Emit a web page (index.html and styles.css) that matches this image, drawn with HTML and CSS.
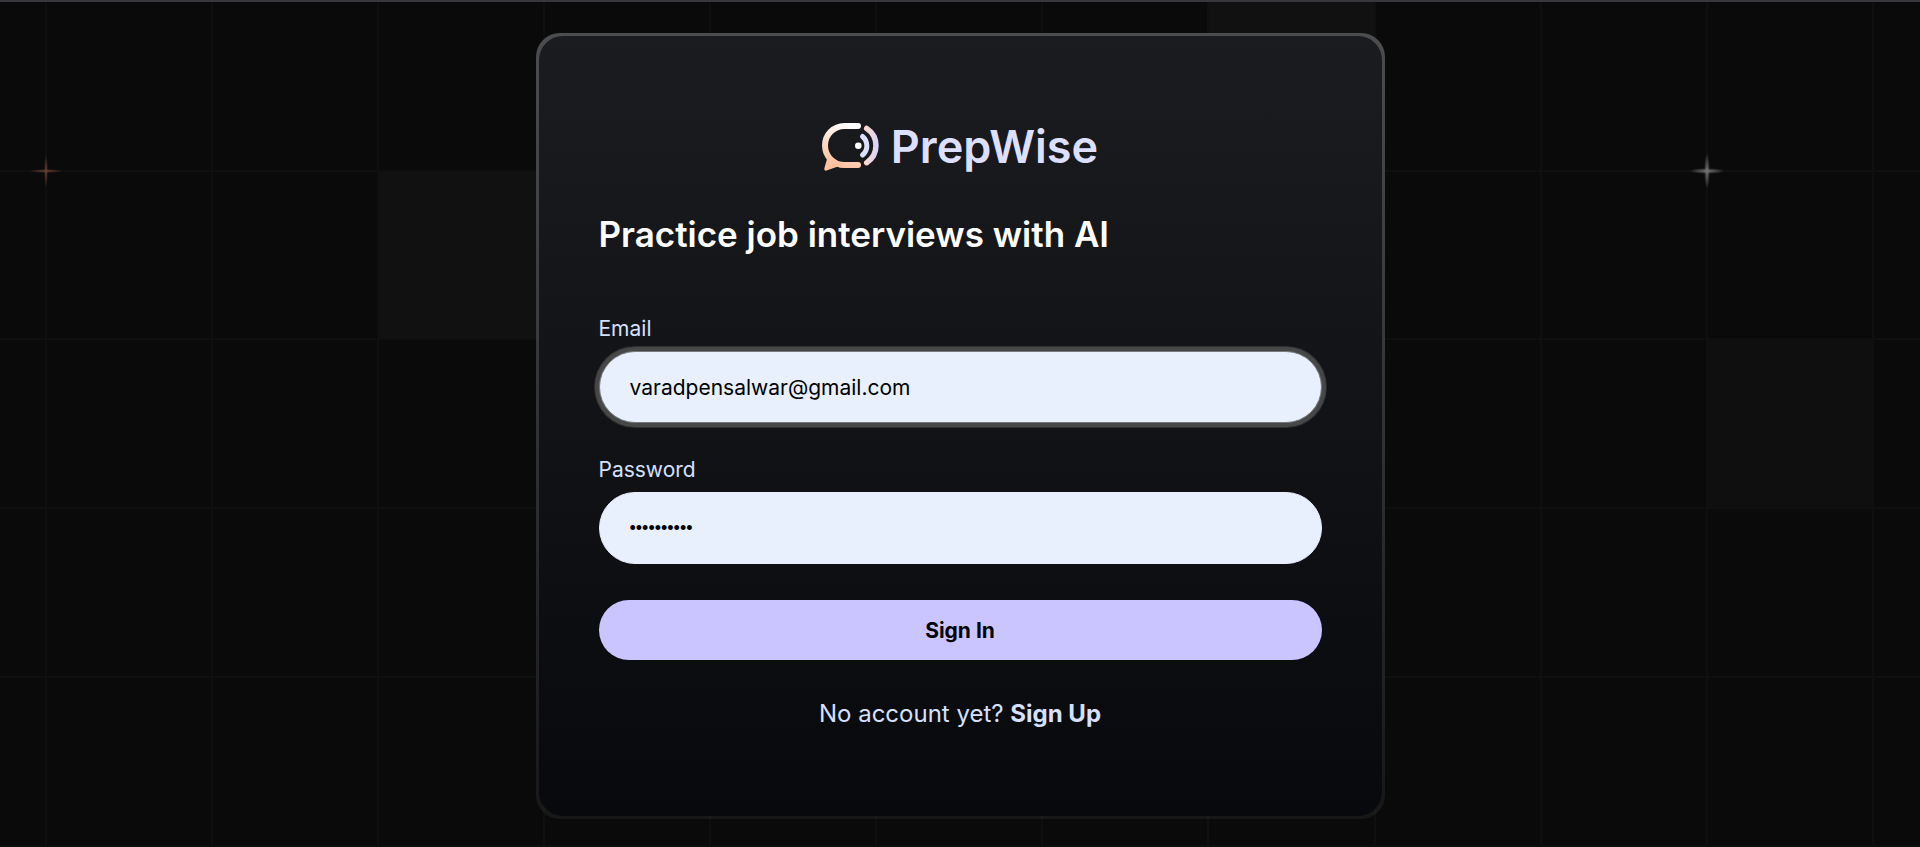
FILE: index.html
```html
<!DOCTYPE html>
<html lang="en">
<head>
<meta charset="utf-8">
<meta name="viewport" content="width=device-width, initial-scale=1">
<title>PrepWise</title>
<link rel="stylesheet" href="styles.css">
</head>
<body>
<svg class="backdrop" viewBox="0 0 1920 847" preserveAspectRatio="none" aria-hidden="true">
  <defs>
    <radialGradient id="ember"><stop offset="0" stop-color="#6b4033"/><stop offset="1" stop-color="#6b4033" stop-opacity="0"/></radialGradient>
    <radialGradient id="glint"><stop offset="0" stop-color="#747474"/><stop offset="1" stop-color="#747474" stop-opacity="0"/></radialGradient>
  </defs>
  <g fill="#111111">
    <rect x="378" y="170" width="166" height="170"/>
    <rect x="1208" y="2" width="167" height="169"/>
    <rect x="1707" y="339" width="166" height="170" fill="#0f0f0f"/>
  </g>
  <path stroke="#0f0f0f" stroke-width="2" fill="none" d="M46 0V847M212 0V847M378 0V847M544 0V847M710 0V847M876 0V847M1042 0V847M1208 0V847M1375 0V847M1541 0V847M1707 0V847M1873 0V847M0 171H1920M0 339H1920M0 508H1920M0 677H1920M0 846H1920"/>
  <g fill="url(#ember)"><ellipse cx="46" cy="171" rx="17" ry="2"/><ellipse cx="46" cy="171" rx="2" ry="17"/></g>
  <g fill="url(#glint)"><ellipse cx="1707" cy="171" rx="18" ry="3"/><ellipse cx="1707" cy="171" rx="3" ry="18"/></g>
</svg>
<main class="page">
  <div class="card-border">
    <section class="card">
      <div class="brand">
        <svg class="brand-mark" viewBox="0 0 57 48" fill="none" aria-hidden="true">
          <defs>
            <linearGradient id="bubble" x1="28" y1="0" x2="10" y2="46" gradientUnits="userSpaceOnUse"><stop offset="0.05" stop-color="#ffffff"/><stop offset="0.9" stop-color="#ffc0a0"/></linearGradient>
            <linearGradient id="wave" x1="42" y1="0" x2="57" y2="0" gradientUnits="userSpaceOnUse"><stop offset="0" stop-color="#ffd9c9"/><stop offset="1" stop-color="#d6d4ff"/></linearGradient>
          </defs>
          <path stroke="url(#bubble)" stroke-width="6" stroke-linecap="round" d="M36 3H22.500A19.500 19.500 0 0 0 22.500 42H36"/>
          <path fill="url(#bubble)" d="M5 36L2.300 45.600Q2 48.200 4.600 47.600L14.500 44L20 41L8 33Z"/>
          <path stroke="#dddfff" stroke-width="5" stroke-linecap="round" d="M40.500 13.500A12 12 0 0 1 40.500 32"/>
          <path stroke="url(#wave)" stroke-width="5.500" stroke-linecap="round" d="M44.700 5.500A20.400 20.400 0 0 1 44.700 39.700"/>
          <circle cx="36.300" cy="22.700" r="3.300" fill="#ffffff"/>
        </svg>
        <h2 class="brand-name">PrepWise</h2>
      </div>
      <h3 class="tagline">Practice job interviews with AI</h3>
      <form class="form">
        <div class="field">
          <label class="label" for="email">Email</label>
          <input class="input input-focused" id="email" type="email" value="varadpensalwar@gmail.com">
        </div>
        <div class="field">
          <label class="label" for="password">Password</label>
          <input class="input input-password" id="password" type="password" value="interview1">
        </div>
        <button class="submit" type="submit">Sign In</button>
      </form>
      <p class="switch">No account yet? <a class="switch-link" href="#">Sign Up</a></p>
    </section>
  </div>
</main>
</body>
</html>
```
FILE: styles.css
```css
* {
  box-sizing: border-box;
}

body {
  margin: 0;
  background: #0a0a0a;
  color: #d6e0ff;
  font-family: Inter, "Liberation Sans", sans-serif;
}

.backdrop {
  position: absolute;
  inset: 0;
  z-index: -1;
  width: 100%;
  height: 100%;
}

.page {
  display: flex;
  align-items: center;
  justify-content: center;
  min-height: 100vh;
  padding: 31px 24px 28px;
  border-top: 2px solid #37373c;
}

.card-border {
  width: 100%;
  max-width: 849px;
  padding: 3px;
  border-radius: 24px;
  background: linear-gradient(#4b4d4f, rgba(75, 77, 79, 0.2));
}

.card {
  display: flex;
  flex-direction: column;
  gap: 36px;
  padding: 84px 60px;
  border-radius: 24px;
  background: linear-gradient(#1a1c20, #08090d);
}

.brand {
  display: flex;
  align-items: center;
  justify-content: center;
  gap: 12px;
}

.brand-mark {
  width: 57px;
  height: 48px;
}

.brand-name {
  margin: 0;
  color: #dddfff;
  font-size: 45px;
  font-weight: 600;
  line-height: 54px;
}

.tagline {
  margin: 0;
  color: #ffffff;
  font-size: 35px;
  font-weight: 600;
  line-height: 48px;
}

.form {
  display: flex;
  flex-direction: column;
  gap: 36px;
  padding-top: 24px;
}

.field {
  display: flex;
  flex-direction: column;
  gap: 12px;
}

.label {
  font-size: 21px;
  line-height: 21px;
}

.input {
  width: 100%;
  height: 72px;
  padding: 0 30px;
  border: 1px solid #e8f0fe;
  border-radius: 36px;
  outline: none;
  background: #e8f0fe;
  color: #000000;
  font-family: inherit;
  font-size: 21px;
}

.input-password {
  font-family: "Liberation Sans", sans-serif;
  font-size: 18px;
}

.input-focused {
  border-color: #77797d;
  box-shadow: 0 0 0 4px #464747, 0 0 0 5px #2f3032;
}

.submit {
  height: 60px;
  border: 0;
  border-radius: 30px;
  background: #cac5fe;
  color: #020408;
  font-family: inherit;
  font-size: 21px;
  font-weight: 700;
}

.switch {
  margin: 0;
  font-size: 24px;
  line-height: 36px;
  text-align: center;
}

.switch-link {
  color: inherit;
  font-weight: 700;
  text-decoration: none;
}
```
